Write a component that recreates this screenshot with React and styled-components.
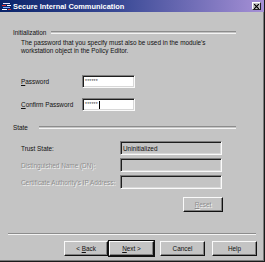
import styled, { createGlobalStyle } from "styled-components"

const Global = createGlobalStyle`
  html, body {
    margin: 0;
    padding: 0;
    background: #c4c4c4;
  }
  body {
    font-family: "Liberation Sans", Arial, sans-serif;
    font-size: 6.4px;
    color: #111;
  }
`

const Window = styled.div`
  width: 265px;
  height: 262px;
  box-sizing: border-box;
  background: #c4c4c4;
  border-right: 1px solid #1a1a1a;
  border-bottom: 1px solid #1a1a1a;
  box-shadow: inset -1px -1px 0 #7a7a7a;
  display: flex;
  flex-direction: column;
`

const TitleBar = styled.div`
  height: 12px;
  display: flex;
  align-items: center;
  padding: 0 3px 0 2px;
  background: linear-gradient(90deg, #0a246a 0%, #3a4a96 45%, #a690d6 100%);
  color: #fff;
`

const Title = styled.span`
  flex: 1;
  margin-left: 2px;
  font-size: 7.4px;
  font-weight: bold;
`

const CloseBox = styled.div`
  width: 9px;
  height: 8px;
  box-sizing: border-box;
  background: #c4c4c4;
  border-top: 1px solid #fff;
  border-left: 1px solid #fff;
  border-right: 1px solid #222;
  border-bottom: 1px solid #222;
  display: flex;
  align-items: center;
  justify-content: center;
`

const Content = styled.div`
  padding: 16px 28px 0 13px;
`

const GroupHead = styled.div`
  display: flex;
  align-items: center;
  gap: ${p => p.gap}px;
  height: 9px;
  margin-top: ${p => p.top || 0}px;
`

const Etch = styled.div`
  flex: 1;
  height: 1px;
  border-top: 1px solid #8c8c8c;
  border-bottom: 1px solid #f4f4f4;
`

const Para = styled.p`
  margin: 2px 0 0 8px;
  line-height: 8px;
`

const FieldGrid = styled.div`
  display: grid;
  grid-template-columns: ${p => p.cols};
  row-gap: ${p => p.rowGap}px;
  align-items: center;
  margin: ${p => p.top}px 0 0 8px;
`

const Label = styled.span`
  color: ${p => (p.disabled ? "#8e8e8e" : "#111")};
  text-shadow: ${p => (p.disabled ? "1px 1px 0 #f2f2f2" : "none")};
`

const Box = styled.div`
  height: ${p => p.h}px;
  box-sizing: border-box;
  background: ${p => (p.white ? "#fff" : "#c4c4c4")};
  border-top: 1px solid #7e7e7e;
  border-left: 1px solid #7e7e7e;
  border-right: 1px solid #fafafa;
  border-bottom: 1px solid #fafafa;
  box-shadow: inset 1px 1px 0 #1e1e1e, inset -1px -1px 0 #d8d8d8;
  padding: 0 2px;
  display: flex;
  align-items: center;
  font-size: 6.4px;
`

const Mask = styled.span`
  font-size: 5px;
  letter-spacing: 0.2px;
  line-height: 5px;
  align-self: flex-start;
  margin-top: 3px;
  color: #333;
`

const Caret = styled.span`
  display: inline-block;
  width: 1px;
  height: 8px;
  background: #000;
  margin-left: 1px;
`

const ResetRow = styled.div`
  display: flex;
  justify-content: flex-end;
  padding-right: 13px;
  margin-top: 8px;
`

const Button = styled.button`
  width: ${p => p.w}px;
  height: 15px;
  padding: 0;
  margin: 0;
  box-sizing: border-box;
  background: #c4c4c4;
  font-family: "Liberation Sans", Arial, sans-serif;
  font-size: 6.4px;
  color: ${p => (p.disabled ? "#8e8e8e" : "#111")};
  text-shadow: ${p => (p.disabled ? "1px 1px 0 #f2f2f2" : "none")};
  border-top: 1px solid #fafafa;
  border-left: 1px solid #fafafa;
  border-right: 1px solid #111;
  border-bottom: 1px solid #111;
  box-shadow: inset -1px -1px 0 #808080
    ${p => (p.primary ? ", 0 0 0 1px #111" : "")};
  outline: none;
  display: flex;
  align-items: center;
  justify-content: center;
`

const Footer = styled.div`
  margin-top: auto;
  padding: 0 7px 5px 8px;
`

const Separator = styled.div`
  height: 0;
  border-top: 1px solid #8c8c8c;
  border-bottom: 1px solid #f4f4f4;
  margin-right: 1px;
`

const ButtonRow = styled.div`
  display: flex;
  justify-content: flex-end;
  margin-top: 6px;
`

const Spacer = styled.div`
  width: ${p => p.w}px;
`

const AppIcon = () => (
  <svg width="9" height="9" viewBox="0 0 9 9">
    <rect x="0" y="0" width="9" height="9" fill="#0a246a" />
    <rect x="1" y="1" width="7" height="1" fill="#e8e8ff" />
    <rect x="0" y="3" width="4" height="1" fill="#e03030" />
    <rect x="5" y="3" width="4" height="1" fill="#ffffff" />
    <rect x="1" y="5" width="7" height="1" fill="#7fb0ff" />
    <rect x="0" y="7" width="5" height="1" fill="#ffffff" />
    <rect x="6" y="7" width="3" height="1" fill="#e03030" />
  </svg>
)

const CloseGlyph = () => (
  <svg width="5" height="5" viewBox="0 0 5 5">
    <path d="M0 0L5 5M5 0L0 5" stroke="#000" strokeWidth="1.2" />
  </svg>
)

export default function App() {
  return (
    <>
      <Global />
      <Window>
        <TitleBar>
          <AppIcon />
          <Title>Secure Internal Communication</Title>
          <CloseBox>
            <CloseGlyph />
          </CloseBox>
        </TitleBar>

        <Content>
          <GroupHead gap={5}>
            <span>Initialization</span>
            <Etch />
          </GroupHead>
          <Para>
            The password that you specify must also be used in the module's
            <br />
            workstation object in the Policy Editor.
          </Para>

          <FieldGrid cols="61px 53px" rowGap={10} top={20}>
            <Label>
              <u>P</u>assword
            </Label>
            <Box white h={13}>
              <Mask>******</Mask>
            </Box>
            <Label>
              <u>C</u>onfirm Password
            </Label>
            <Box white h={13}>
              <Mask>******</Mask>
              <Caret />
            </Box>
          </FieldGrid>

          <GroupHead gap={11} top={12}>
            <span>State</span>
            <Etch />
          </GroupHead>

          <FieldGrid cols="99px 102px" rowGap={3} top={9}>
            <Label>Trust State:</Label>
            <Box h={14}>Uninitialized</Box>
            <Label disabled>Distinguished Name (DN):</Label>
            <Box h={14} />
            <Label disabled>Certificate Authority's IP Address:</Label>
            <Box h={14} />
          </FieldGrid>

          <ResetRow>
            <Button w={40} disabled>
              <u>R</u>eset
            </Button>
          </ResetRow>
        </Content>

        <Footer>
          <Separator />
          <ButtonRow>
            <Button w={44}>
              &lt;&nbsp;<u>B</u>ack
            </Button>
            <Spacer w={1} />
            <Button w={45} primary>
              <u>N</u>ext&nbsp;&gt;
            </Button>
            <Spacer w={6} />
            <Button w={45}>Cancel</Button>
            <Spacer w={7} />
            <Button w={45}>Help</Button>
          </ButtonRow>
        </Footer>
      </Window>
    </>
  )
}
